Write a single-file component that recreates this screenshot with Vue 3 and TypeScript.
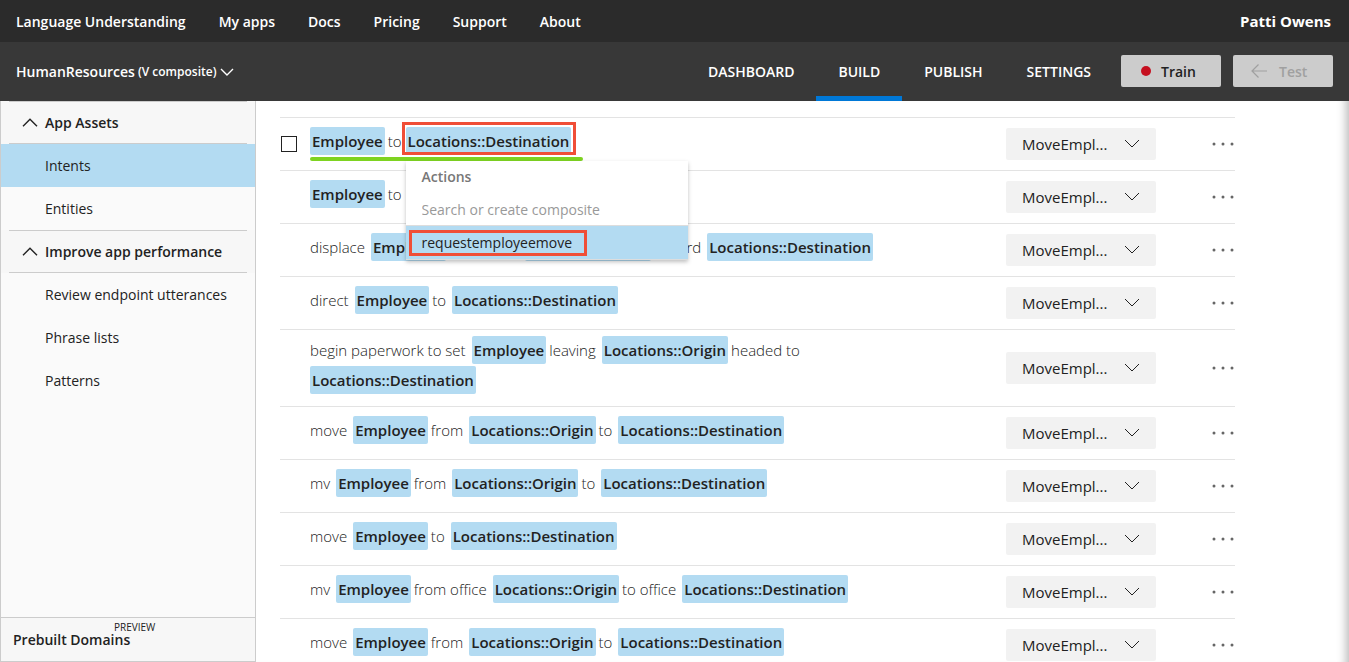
<script setup lang="ts">
interface Piece {
  text: string
  entity?: boolean
}

interface Utterance {
  id: number
  pieces: Piece[]
  active?: boolean
}

// Entity labels are written in square brackets.
function parse(source: string): Piece[] {
  return source
    .split(/(\[[^\]]+\])/)
    .map((part) => part.trim())
    .filter((part) => part.length > 0)
    .map((part) =>
      part.startsWith('[') ? { text: part.slice(1, -1), entity: true } : { text: part },
    )
}

const sources: string[] = [
  '[Employee] to [Locations::Destination]',
  '[Employee] to [Locations::Destination]',
  'displace [Employee] away from [Locations::Origin] toward [Locations::Destination]',
  'direct [Employee] to [Locations::Destination]',
  'begin paperwork to set [Employee] leaving [Locations::Origin] headed to [Locations::Destination]',
  'move [Employee] from [Locations::Origin] to [Locations::Destination]',
  'mv [Employee] from [Locations::Origin] to [Locations::Destination]',
  'move [Employee] to [Locations::Destination]',
  'mv [Employee] from office [Locations::Origin] to office [Locations::Destination]',
  'move [Employee] from [Locations::Origin] to [Locations::Destination]',
]

const utterances: Utterance[] = sources.map((source, index) => ({
  id: index + 1,
  pieces: parse(source),
  active: index === 0,
}))

const siteLinks = ['Language Understanding', 'My apps', 'Docs', 'Pricing', 'Support', 'About']
const tabs = ['DASHBOARD', 'BUILD', 'PUBLISH', 'SETTINGS']
const sections = [
  { title: 'App Assets', items: ['Intents', 'Entities'] },
  {
    title: 'Improve app performance',
    items: ['Review endpoint utterances', 'Phrase lists', 'Patterns'],
  },
]
</script>

<template>
  <div class="page">
    <header class="site-bar">
      <nav class="site-nav">
        <a v-for="link in siteLinks" :key="link" href="#">{{ link }}</a>
      </nav>
      <a class="user" href="#">Patti Owens</a>
    </header>

    <div class="app-bar">
      <button class="app-name" type="button">
        <span>HumanResources</span>
        <small>(V composite)</small>
        <svg width="14" height="8" viewBox="0 0 14 8" aria-hidden="true">
          <path d="M1 1l6 6 6-6" fill="none" stroke="currentColor" stroke-width="1.4" />
        </svg>
      </button>
      <nav class="tabs">
        <a v-for="tab in tabs" :key="tab" href="#" :class="{ current: tab === 'BUILD' }">{{ tab }}</a>
      </nav>
      <div class="app-actions">
        <button class="action" type="button">
          <svg width="10" height="10" viewBox="0 0 10 10" aria-hidden="true">
            <circle cx="5" cy="5" r="5" fill="#c50f1f" />
          </svg>
          Train
        </button>
        <button class="action" type="button" disabled>
          <svg width="16" height="14" viewBox="0 0 16 14" aria-hidden="true">
            <path d="M16 7H1M7.500 .5L1 7l6.500 6.500" fill="none" stroke="currentColor" stroke-width="1.200" />
          </svg>
          Test
        </button>
      </div>
    </div>

    <div class="body">
      <aside class="sidebar">
        <section v-for="section in sections" :key="section.title">
          <h2>
            <button type="button">
              <svg width="16" height="9" viewBox="0 0 16 9" aria-hidden="true">
                <path d="M1 8.300l7-7 7 7" fill="none" stroke="currentColor" stroke-width="1.400" />
              </svg>
              {{ section.title }}
            </button>
          </h2>
          <a
            v-for="item in section.items"
            :key="item"
            href="#"
            :class="{ selected: item === 'Intents' }"
          >{{ item }}</a>
        </section>
        <a class="prebuilt" href="#">
          <small>PREVIEW</small>
          <span>Prebuilt Domains</span>
        </a>
      </aside>

      <main class="content">
        <ul class="utterances">
          <li v-for="utterance in utterances" :key="utterance.id">
            <span class="tick">
              <input v-if="utterance.active" type="checkbox" aria-label="Select utterance" />
            </span>
            <div class="phrase-cell">
              <div class="phrase" :class="{ composite: utterance.active }">
                <span
                  v-for="(piece, index) in utterance.pieces"
                  :key="index"
                  :class="{
                    entity: piece.entity,
                    plain: !piece.entity,
                    target: utterance.active && index === utterance.pieces.length - 1,
                  }"
                >{{ piece.text }}<span
                  v-if="utterance.active && index === utterance.pieces.length - 1"
                  class="menu"
                >
                  <strong>Actions</strong>
                  <input type="text" placeholder="Search or create composite" aria-label="Search or create composite" />
                  <button type="button"><span>requestemployeemove</span></button>
                </span></span>
              </div>
            </div>
            <div class="intent">
              <select :aria-label="`Intent of utterance ${utterance.id}`">
                <option>MoveEmpl...</option>
              </select>
              <svg width="16" height="9" viewBox="0 0 16 9" aria-hidden="true">
                <path d="M1 1l7 7 7-7" fill="none" stroke="currentColor" />
              </svg>
            </div>
            <button class="more" type="button" aria-label="More options">
              <svg width="23" height="4" viewBox="0 0 23 4" aria-hidden="true">
                <circle cx="2" cy="2" r="1.500" />
                <circle cx="11" cy="2" r="1.500" />
                <circle cx="20" cy="2" r="1.500" />
              </svg>
            </button>
          </li>
        </ul>
      </main>
    </div>
  </div>
</template>

<style>
body {
  margin: 0;
  overflow: hidden;
}
</style>

<style scoped>
.page {
  display: flex;
  flex-direction: column;
  height: 100vh;
  background: #fff;
  color: #222;
  font-family: 'Open Sans', 'Noto Sans', sans-serif;
  font-size: 14px;
}

.page * {
  box-sizing: border-box;
}

a {
  color: inherit;
  text-decoration: none;
}

button,
input,
select {
  margin: 0;
  border: 0;
  padding: 0;
  background: none;
  color: inherit;
  font: inherit;
}

svg {
  display: block;
  flex: none;
}

.site-bar {
  display: flex;
  flex: none;
  align-items: center;
  justify-content: space-between;
  height: 42px;
  padding: 0 18px 0 16px;
  background: #2b2b2b;
  color: #fff;
  font-weight: 600;
}

.site-nav {
  display: flex;
  gap: 33px;
}

.user {
  font-size: 15px;
  font-weight: 700;
}

.app-bar {
  display: flex;
  flex: none;
  height: 59px;
  padding: 0 16px;
  background: #383838;
  color: #fff;
  font-weight: 600;
}

.app-name {
  display: flex;
  align-items: center;
  gap: 3px;
  margin-right: auto;
}

.app-name small {
  font-size: 12px;
}

.tabs {
  display: flex;
}

.tabs a {
  display: flex;
  align-items: center;
  padding: 5px 22px 0;
  border-bottom: 5px solid transparent;
}

.tabs a.current {
  border-bottom-color: #0078d7;
}

.app-actions {
  display: flex;
  align-items: center;
  gap: 12px;
  margin-left: 8px;
  padding-bottom: 1px;
}

.action {
  display: flex;
  align-items: center;
  gap: 10px;
  width: 100px;
  height: 32px;
  padding-left: 20px;
  border-radius: 2px;
  background: #ccc;
  color: #222;
}

.action:disabled {
  gap: 12px;
  padding-left: 18px;
  color: #a0a0a0;
}

.body {
  display: flex;
  flex: 1;
  min-height: 0;
}

.sidebar {
  display: flex;
  flex: none;
  flex-direction: column;
  width: 256px;
  border: 1px solid #ccc;
  border-top: 0;
  background: #fafafa;
}

.sidebar h2 {
  margin: 0;
  padding: 0 8px;
  background: #f7f7f7;
  font-size: 14px;
  font-weight: 600;
}

.sidebar h2 button {
  display: flex;
  align-items: center;
  gap: 7px;
  width: 100%;
  height: 43px;
  padding-left: 13px;
  border-top: 1px solid #ccc;
  border-bottom: 1px solid #ccc;
}

.sidebar section a {
  display: block;
  padding-left: 44px;
  line-height: 43px;
}

.sidebar section a.selected {
  background: #b3dbf2;
}

.prebuilt {
  display: flex;
  flex-direction: column;
  height: 44px;
  margin-top: auto;
  padding: 4px 0 0 12px;
  border-top: 1px solid #ccc;
  background: #f7f7f7;
  font-weight: 600;
  line-height: 16px;
}

.prebuilt small {
  padding-left: 101px;
  font-size: 10px;
  font-weight: 400;
  line-height: 10px;
}

.content {
  flex: 1;
  min-width: 0;
  padding: 16px 114px 0 24px;
  overflow: hidden;
  box-shadow: inset -11px 0 10px -8px #bbb;
}

.utterances {
  margin: 0;
  padding: 0;
  list-style: none;
  font-size: 15px;
}

.utterances li {
  display: grid;
  grid-template-columns: 30px minmax(0, 1fr) 150px 79px;
  align-items: center;
  min-height: 53px;
  border-top: 1px solid #e3e3e3;
}

.tick input {
  display: block;
  width: 16px;
  height: 16px;
  margin-left: 1px;
  border: 1px solid #222;
  background: #fff;
  appearance: none;
}

.phrase-cell {
  padding: 6px 48px 12px 0;
}

.phrase {
  display: flex;
  flex-wrap: wrap;
  gap: 2px 0;
  line-height: 28px;
}

.plain {
  padding: 0 6px 0 3px;
  font-weight: 300;
}

.plain:first-child {
  padding-left: 0;
}

.entity {
  padding: 0 2px;
  border-radius: 2px;
  background: #b3dbf2;
  font-weight: 600;
}

.composite {
  position: relative;
  width: fit-content;
}

.composite .plain {
  padding-right: 4px;
}

.composite::after {
  position: absolute;
  right: -12px;
  bottom: -6px;
  left: 0;
  height: 4px;
  border-radius: 2px;
  background: #7ed321;
  content: '';
}

.target {
  position: relative;
}

.target::after {
  position: absolute;
  inset: -5px -5px 0 -4px;
  border: 3px solid #f04e37;
  content: '';
}

.menu {
  position: absolute;
  z-index: 2;
  top: 34px;
  left: 0;
  display: flex;
  flex-direction: column;
  width: 282px;
  background: #fff;
  box-shadow: 0 2px 4px rgb(0 0 0 / 25%);
  font-size: 14px;
}

.menu strong {
  padding-left: 16px;
  color: #777;
  font-weight: 600;
  line-height: 32px;
}

.menu input {
  height: 33px;
  padding: 0 16px;
  border-bottom: 1px solid #ddd;
  font-weight: 400;
}

.menu input::placeholder {
  color: #999;
  opacity: 1;
}

.menu button {
  height: 34px;
  padding-left: 3px;
  border-bottom: 1px solid #ddd;
  background: #b3dbf2;
  font-weight: 400;
  line-height: 20px;
  text-align: left;
}

.menu button span {
  display: inline-block;
  padding: 0 12px 0 10px;
  border: 3px solid #f04e37;
}

.intent {
  position: relative;
}

.intent select {
  display: block;
  width: 100%;
  height: 32px;
  padding-left: 16px;
  border-radius: 2px;
  background: #f2f2f2;
  appearance: none;
}

.intent svg {
  position: absolute;
  top: 11px;
  right: 16px;
  pointer-events: none;
}

.more {
  justify-self: end;
  fill: #666;
}
</style>
